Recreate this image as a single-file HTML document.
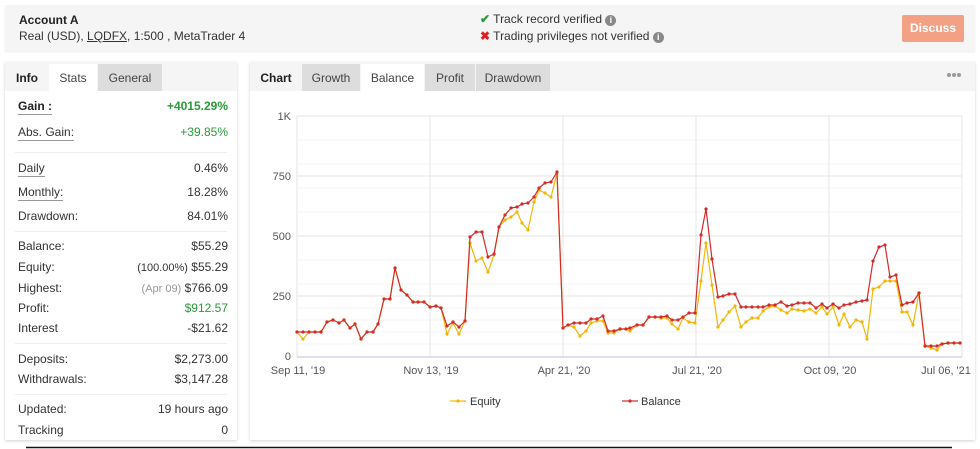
<!DOCTYPE html>
<html><head><meta charset="utf-8"><style>
*{margin:0;padding:0;box-sizing:border-box}
body{width:980px;height:449px;background:#fff;font-family:"Liberation Sans",Arial,sans-serif;font-size:12px;color:#333;position:relative;overflow:hidden}
.abs{position:absolute}
.top{left:5px;top:5px;width:970px;height:46px;background:#f5f5f5;box-shadow:0 1px 2px rgba(0,0,0,.08)}
.panel{background:#fff;box-shadow:0 1px 3px rgba(0,0,0,.18)}
.tab{position:absolute;top:0;height:28px;line-height:29px;text-align:center;font-size:12px;color:#444}
.r{position:absolute;left:13px;right:9px;height:16px}
.r .l{position:absolute;left:0;top:0}
.r .v{position:absolute;right:0;top:0}
.u{border-bottom:1px solid #999;padding-bottom:1px}
.sep{position:absolute;left:10px;right:10px;height:1px;background:#eee}
.g{color:#2a9a3a}
</style></head><body>
<div class="abs top">
  <div class="abs" style="left:14px;top:8px;font-weight:bold;color:#222">Account A</div>
  <div class="abs" style="left:14px;top:24px;color:#333">Real (USD), <span style="text-decoration:underline">LQDFX</span>, 1:500 , MetaTrader 4</div>
  <div class="abs" style="left:475px;top:7px;color:#333"><span style="color:#2a9a3a;font-weight:bold">✔</span> Track record verified <span style="display:inline-block;width:11px;height:11px;border-radius:50%;background:#888;color:#fff;font-size:9px;line-height:11px;text-align:center;font-weight:bold">i</span></div>
  <div class="abs" style="left:475px;top:24px;color:#333"><span style="color:#e02020;font-weight:bold">✖</span> Trading privileges not verified <span style="display:inline-block;width:11px;height:11px;border-radius:50%;background:#888;color:#fff;font-size:9px;line-height:11px;text-align:center;font-weight:bold">i</span></div>
  <div class="abs" style="left:897px;top:10px;width:62px;height:27px;background:#f2a184;border-radius:2px;color:#fff;font-weight:bold;text-align:center;line-height:27px">Discuss</div>
</div>

<div class="abs panel" style="left:5px;top:62px;width:232px;height:378px">
  <div class="abs" style="left:0;top:0;width:232px;height:29px;background:#f5f5f5"></div>
  <div class="tab" style="left:0;width:44px;top:2px;font-weight:bold;color:#222">Info</div>
  <div class="tab" style="left:44px;width:48px;top:2px;background:#fff;height:27px">Stats</div>
  <div class="tab" style="left:93px;width:64px;top:2px;background:#ddd;height:27px">General</div>
  <div class="r" style="top:37px"><span class="l u" style="font-weight:bold;color:#222">Gain :</span><span class="v g" style="font-weight:bold">+4015.29%</span></div>
  <div class="r" style="top:63px"><span class="l u">Abs. Gain:</span><span class="v g">+39.85%</span></div>
  <div class="sep" style="top:90px"></div>
  <div class="r" style="top:99px"><span class="l u">Daily</span><span class="v">0.46%</span></div>
  <div class="r" style="top:123px"><span class="l u">Monthly:</span><span class="v">18.28%</span></div>
  <div class="r" style="top:147px"><span class="l">Drawdown:</span><span class="v">84.01%</span></div>
  <div class="sep" style="top:169px"></div>
  <div class="r" style="top:177px"><span class="l">Balance:</span><span class="v">$55.29</span></div>
  <div class="r" style="top:198px"><span class="l">Equity:</span><span class="v"><span style="font-size:11px">(100.00%)</span> $55.29</span></div>
  <div class="r" style="top:219px"><span class="l">Highest:</span><span class="v"><span style="color:#999;font-size:11px">(Apr 09)</span> $766.09</span></div>
  <div class="r" style="top:239px"><span class="l">Profit:</span><span class="v g">$912.57</span></div>
  <div class="r" style="top:259px"><span class="l">Interest</span><span class="v">-$21.62</span></div>
  <div class="sep" style="top:281px"></div>
  <div class="r" style="top:290px"><span class="l">Deposits:</span><span class="v">$2,273.00</span></div>
  <div class="r" style="top:310px"><span class="l">Withdrawals:</span><span class="v">$3,147.28</span></div>
  <div class="sep" style="top:332px"></div>
  <div class="r" style="top:340px"><span class="l">Updated:</span><span class="v">19 hours ago</span></div>
  <div class="r" style="top:361px"><span class="l">Tracking</span><span class="v">0</span></div>
</div>

<div class="abs panel" style="left:250px;top:62px;width:725px;height:378px">
  <div class="abs" style="left:0;top:0;width:725px;height:29px;background:#f5f5f5"></div>
  <div class="tab" style="left:0;width:52px;top:2px;font-weight:bold;color:#222">Chart</div>
  <div class="tab" style="left:52px;width:58px;top:2px;background:#ddd;height:27px">Growth</div>
  <div class="tab" style="left:111px;width:63px;top:2px;background:#fff;height:27px">Balance</div>
  <div class="tab" style="left:175px;width:50px;top:2px;background:#ddd;height:27px">Profit</div>
  <div class="tab" style="left:226px;width:74px;top:2px;background:#ddd;height:27px">Drawdown</div>
  <svg class="abs" style="left:696px;top:10px" width="16" height="6"><circle cx="3" cy="3" r="2" fill="#999"/><circle cx="8" cy="3" r="2" fill="#999"/><circle cx="13" cy="3" r="2" fill="#999"/></svg>
</div>

<svg class="abs" style="left:0;top:0" width="980" height="449">
<defs>
<marker id="mr" markerWidth="4" markerHeight="4" refX="2" refY="2" markerUnits="userSpaceOnUse"><circle cx="2" cy="2" r="1.6" fill="#d42a2a"/></marker>
<marker id="my" markerWidth="4" markerHeight="4" refX="2" refY="2" markerUnits="userSpaceOnUse"><circle cx="2" cy="2" r="1.6" fill="#f2b705"/></marker>
</defs>
<g stroke="#f3f3f3" stroke-width="1">
<line x1="297" y1="140" x2="962" y2="140"/><line x1="297" y1="164" x2="962" y2="164"/><line x1="297" y1="188" x2="962" y2="188"/><line x1="297" y1="212" x2="962" y2="212"/><line x1="297" y1="260" x2="962" y2="260"/><line x1="297" y1="284" x2="962" y2="284"/><line x1="297" y1="308" x2="962" y2="308"/><line x1="297" y1="320" x2="962" y2="320"/><line x1="297" y1="332" x2="962" y2="332"/><line x1="297" y1="344" x2="962" y2="344"/>
</g>
<g stroke="#e6e6e6" stroke-width="1">
<line x1="297" y1="116" x2="962" y2="116"/><line x1="297" y1="176" x2="962" y2="176"/><line x1="297" y1="236" x2="962" y2="236"/><line x1="297" y1="296" x2="962" y2="296"/>
<line x1="297" y1="116" x2="297" y2="357"/><line x1="430" y1="116" x2="430" y2="357"/><line x1="563" y1="116" x2="563" y2="357"/><line x1="696" y1="116" x2="696" y2="357"/><line x1="829" y1="116" x2="829" y2="357"/><line x1="962" y1="116" x2="962" y2="357"/>
</g>
<line x1="297" y1="357" x2="962" y2="357" stroke="#c8cde8" stroke-width="1.2"/>
<polyline fill="none" stroke="#f2b705" stroke-width="1.2" marker-start="url(#my)" marker-mid="url(#my)" marker-end="url(#my)" points="297,332 303,339 309,332 315,332 321,332 327,322 333,320 339,323 344,320 350,328 355,324 361,339 367,332 373,332 378,324 384,299 390,299 395,268 401,290 407,295 413,302 418,302 424,302 430,307 436,306 441,308 447,334 453,323 459,334 465,321 470,243 476,261 482,258 488,272 494,255 499,227 505,220 511,217 517,212 522,223 528,230 534,202 539,190 545,193 551,197 557,173 563,328 568,325 574,327 580,336 586,331 591,323 597,321 603,321 608,333 614,333 620,329 626,329 630,331 637,325 643,325 649,317 655,317 661,318 667,318 672,324 678,329 683,318 689,322 695,323 701,281 706,243 712,285 718,327 723,320 729,312 735,306 741,327 746,322 752,318 758,318 763,311 769,307 775,306 781,310 787,313 792,309 798,310 804,311 810,309 816,313 822,307 827,314 833,307 839,325 844,314 850,327 856,320 862,322 867,339 873,289 879,287 885,281 890,281 896,281 902,312 907,312 913,325 919,293 925,346 931,348 937,350 942,344 948,343 954,343 960,343"/>
<polyline fill="none" stroke="#d42a2a" stroke-width="1.2" marker-start="url(#mr)" marker-mid="url(#mr)" marker-end="url(#mr)" points="297,332 303,332 309,332 315,332 321,332 327,322 333,320 339,323 344,320 350,328 355,324 361,339 367,332 373,332 378,324 384,299 390,299 395,268 401,290 407,295 413,302 418,302 424,302 430,307 436,306 441,308 447,326 453,322 459,327 465,321 470,237 476,232 482,232 488,257 494,254 499,227 505,215 511,208 517,207 522,204 528,203 534,197 539,188 545,183 551,182 557,172 563,328 568,325 574,323 580,323 586,323 591,319 597,319 603,316 608,331 614,331 620,329 626,329 630,328 637,325 643,325 649,317 655,317 661,317 667,316 672,320 678,320 683,317 689,313 695,313 701,235 706,209 712,259 718,297 723,296 729,294 735,294 741,307 746,307 752,307 758,307 763,307 769,305 775,305 781,302 787,306 792,305 798,303 804,303 810,303 816,308 822,304 827,308 833,304 839,308 844,305 850,304 856,302 862,301 867,300 873,261 879,247 885,245 890,277 896,275 902,305 907,303 913,302 919,293 925,346 931,346 937,346 942,344 948,343 954,343 960,343"/>
<g font-family="Liberation Sans,Arial,sans-serif" font-size="11" fill="#555">
<text x="291" y="120" text-anchor="end">1K</text><text x="291" y="180" text-anchor="end">750</text><text x="291" y="240" text-anchor="end">500</text><text x="291" y="300" text-anchor="end">250</text><text x="291" y="360" text-anchor="end">0</text>
<text x="298" y="374" text-anchor="middle">Sep 11, '19</text><text x="431" y="374" text-anchor="middle">Nov 13, '19</text><text x="564" y="374" text-anchor="middle">Apr 21, '20</text><text x="697" y="374" text-anchor="middle">Jul 21, '20</text><text x="830" y="374" text-anchor="middle">Oct 09, '20</text><text x="946" y="374" text-anchor="middle">Jul 06, '21</text>
<text x="470" y="405" fill="#333">Equity</text><text x="641" y="405" fill="#333">Balance</text>
</g>
<line x1="450" y1="401" x2="466" y2="401" stroke="#f2b705" stroke-width="1.2"/><circle cx="458" cy="401" r="1.6" fill="#f2b705"/>
<line x1="622" y1="401" x2="638" y2="401" stroke="#d42a2a" stroke-width="1.2"/><circle cx="630" cy="401" r="1.6" fill="#d42a2a"/>
<line x1="26" y1="447.5" x2="952" y2="447.5" stroke="#111" stroke-width="1.5"/>
</svg>
</body></html>
